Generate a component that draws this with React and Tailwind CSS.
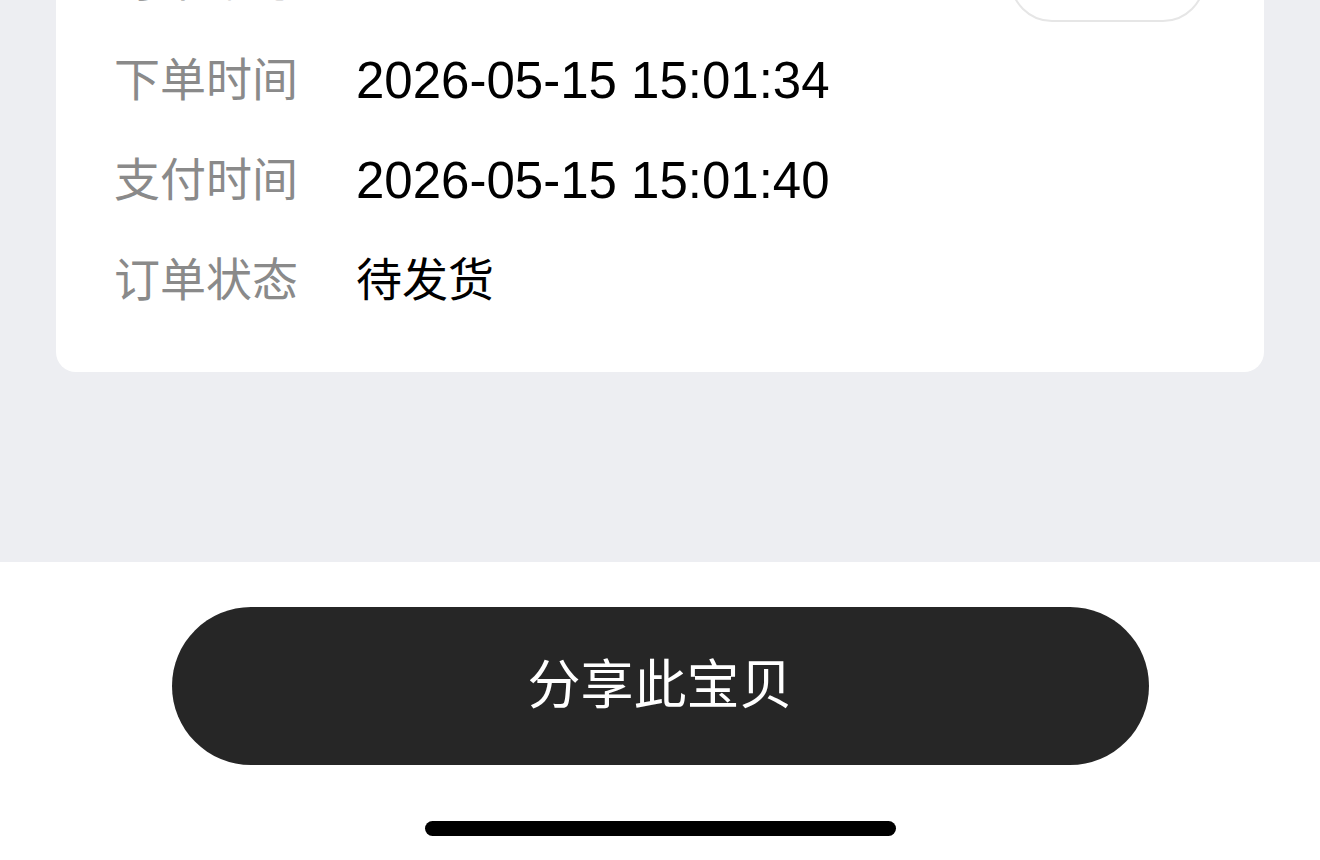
export default function App() {
  const rows = [
    { label: '订单编号', value: '', copy: true },
    { label: '下单时间', value: '2026-05-15 15:01:34', num: true },
    { label: '支付时间', value: '2026-05-15 15:01:40', num: true },
    { label: '订单状态', value: '待发货' },
  ];

  return (
    <div
      className="w-[1320px] h-[860px] overflow-hidden flex flex-col bg-white"
      style={{ fontFamily: '"Liberation Sans", "Noto Sans CJK SC", sans-serif' }}
    >
      {/* Scrolled order details */}
      <div className="h-[562px] bg-[#edeef2] px-[56px] overflow-hidden">
        <div className="-mt-[70px] bg-white rounded-[20px] pl-[58px] pr-[59px] pb-[42px]">
          {rows.map((row) => (
            <div key={row.label} className="h-[100px] flex items-center">
              <div className="w-[242px] text-[46px] text-[#8a8a8a] leading-none">{row.label}</div>
              <div className={row.num ? 'flex-1 text-[51px] text-black leading-none' : 'flex-1 text-[46px] text-black leading-none'}>
                {row.value}
              </div>
              {row.copy && (
                <div className="w-[195px] h-[84px] rounded-full border-2 border-[#e6e6e6] flex items-center justify-center text-[36px] text-[#333]">
                  复制
                </div>
              )}
            </div>
          ))}
        </div>
      </div>

      {/* Bottom action bar */}
      <div className="flex-1 flex flex-col items-center">
        <button className="mt-[45px] w-[977px] h-[158px] rounded-full bg-[#262626] text-white text-[53px] font-normal">
          分享此宝贝
        </button>
        <div className="mt-[56px] w-[471px] h-[15px] rounded-full bg-black" />
      </div>
    </div>
  );
}
